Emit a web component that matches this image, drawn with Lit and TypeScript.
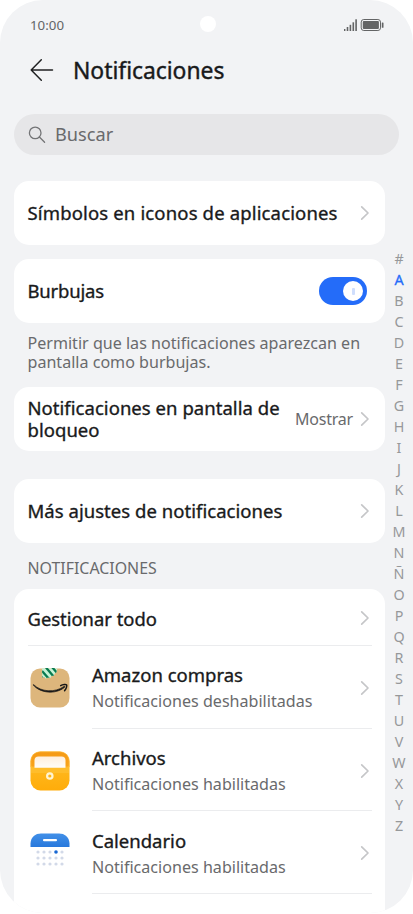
import { LitElement, html, css, svg } from "lit";

const base = css`
  :host { display: block; box-sizing: border-box; font-family: "Noto Sans", sans-serif; color: #191a1b; }
  * { box-sizing: border-box; }
  svg { display: block; flex: none; }
`;

const chevron = html`<svg width="10" height="16" viewBox="0 0 10 16" fill="none" stroke="#c5c6c8" stroke-width="1.7" stroke-linecap="round" stroke-linejoin="round"><path d="M1.700 1.800 8 8 1.700 14.200" /></svg>`;

const amazonIcon = html`<svg width="40" height="40" viewBox="0 0 40 40">
  <defs><clipPath id="tape"><path d="M12 0H27.500L26.300 4.500 25 5.200 24 7.600 21.600 7.900 20.300 10 18 9.600 15.600 10.800 14.500 9 12.300 9.400Z" /></clipPath></defs>
  <rect x=".5" y=".5" width="39" height="39" rx="9.500" fill="#ddb67c" />
  <g clip-path="url(#tape)">
    <rect x="11" y=".5" width="18" height="12" fill="#c5f3d5" />
    <path d="M10 7 14 12M12 3 20 12M16-.5 24 9M22-1 28 6" stroke="#087a50" stroke-width="2.300" />
  </g>
  <path d="M3.700 16.700C11 24 25 25 34 18.400c.700-.300 1.200.300.600.900C25.500 26.800 10.500 25.200 3.400 17.200c-.300-.400 0-.800.300-.500Z" fill="#171717" stroke="#171717" stroke-width=".7" />
  <path d="M30.700 17.600c2-1.200 5.400-1.300 5.900-.7.400.800-.100 3.800-2 5.700" fill="none" stroke="#171717" stroke-width="1.500" stroke-linecap="round" />
</svg>`;

const filesIcon = html`<svg width="40" height="40" viewBox="0 0 40 40">
  <defs>
    <linearGradient id="back" x2="0" y2="1"><stop offset="0" stop-color="#f59a16" /><stop offset="1" stop-color="#f9a41a" /></linearGradient>
    <linearGradient id="front" x2="0" y2="1"><stop offset="0" stop-color="#ffc02b" /><stop offset="1" stop-color="#ffac0a" /></linearGradient>
    <linearGradient id="paper" x2="0" y2="1"><stop offset="0" stop-color="#ffefdc" /><stop offset="1" stop-color="#fffdf9" /></linearGradient>
  </defs>
  <rect x=".5" y=".5" width="39" height="39" rx="10" fill="url(#front)" />
  <path d="M.8 16V10.500C.8 4.500 5 .8 10.500.8H29.500C35 .8 39.200 4.500 39.200 10.500V16Z" fill="url(#back)" stroke="#ffc14d" stroke-width=".6" />
  <path d="M1 14.500c1 2 2.500 2.400 4 2.400H35c1.500 0 3-.4 4-2.400V22H1Z" fill="#ffbd2b" />
  <path d="M4.500 16.800V9.500Q4.500 5.500 8.500 5.500H31.500Q35.500 5.500 35.500 9.500V16.800Z" fill="url(#paper)" />
  <circle cx="19.800" cy="25" r="2.700" fill="none" stroke="#fff4d2" stroke-width="2.200" />
</svg>`;

const dots = [19, 25, 31].flatMap((y, r) =>
  [8, 14, 20, 26, 32].map((x, c) => svg`<circle cx=${x} cy=${y} r=${r === 0 && c === 3 ? 1.8 : 1.6} fill=${r === 0 && c === 3 ? "#1767d2" : "#d2d9e8"} />`)
);
const calendarIcon = html`<svg width="40" height="40" viewBox="0 0 40 40">
  <defs><linearGradient id="cal" x2="0" y2="1"><stop offset="0" stop-color="#4290e8" /><stop offset="1" stop-color="#2878dc" /></linearGradient></defs>
  <path d="M.5 14V10.500C.8 3.800 5.500.5 11 .5H29C34.500.5 39.200 3.800 39.500 10.500V14Z" fill="url(#cal)" />
  <rect x="13" y="6" width="14" height="2.200" rx="1" fill="#fff" />
  ${dots}
</svg>`;

class StatusBar extends LitElement {
  static styles = [base, css`
    :host { height: 48px; padding: 0 28px 0 30px; display: grid; grid-template-columns: 1fr 16px 1fr; align-items: center; }
    .time { font-size: 13.300px; color: #636567; line-height: 18px; padding-top: 1px; }
    .camera { width: 16px; height: 16px; border-radius: 50%; background: #fff; }
    .right { display: flex; justify-content: flex-end; padding-top: 1px; }
  `];
  render() {
    return html`<div class="time">10:00</div><div class="camera"></div>
      <div class="right"><svg width="42" height="14" viewBox="0 0 42 14" fill="#636465">
        <rect x="1" y="11" width="1.400" height="2" /><rect x="3.700" y="9" width="1.600" height="4" /><rect x="6.600" y="6.800" width="1.600" height="6.200" /><rect x="9.500" y="4.300" width="1.600" height="8.700" /><rect x="12.300" y="1.300" width="1.600" height="11.700" />
        <rect x="18.200" y="1.500" width="19.300" height="11" rx="2.600" fill="none" stroke="#636465" stroke-width="1" />
        <rect x="19.800" y="3.100" width="16.100" height="7.800" rx="1" /><rect x="38.800" y="4.400" width="1.700" height="5.400" rx=".6" />
      </svg></div>`;
  }
}
customElements.define("status-bar", StatusBar);

class SettingRow extends LitElement {
  static properties = { label: {}, value: {}, toggle: { type: Boolean } };
  declare label: string;
  declare value: string;
  declare toggle: boolean;
  static styles = [base, css`
    :host { background: #fff; border-radius: 15px; height: 64px; padding: 0 15px 0 13.500px; display: flex; align-items: center; letter-spacing: .04px; }
    .label { flex: 1; font-size: 18.500px; line-height: 22px; -webkit-text-stroke: .35px currentColor; }
    .value { font-size: 16px; color: #696a6c; letter-spacing: -.2px; margin-right: 7px; }
    .switch { width: 48px; height: 28px; border-radius: 14px; background: #246cf9; margin-right: 3px; padding: 4px; display: flex; justify-content: flex-end; }
    .knob { width: 20px; height: 20px; border-radius: 50%; background: #fff; display: grid; place-items: center; }
    .mark { width: 3px; height: 7px; border-radius: 1px; background: #cfdefd; }
  `];
  render() {
    return html`<div class="label">${this.label}</div>
      ${this.value ? html`<div class="value">${this.value}</div>` : ""}
      ${this.toggle ? html`<div class="switch"><div class="knob"><div class="mark"></div></div></div>` : chevron}`;
  }
}
customElements.define("setting-row", SettingRow);

const apps = [
  { name: "Amazon compras", state: "Notificaciones deshabilitadas", icon: amazonIcon },
  { name: "Archivos", state: "Notificaciones habilitadas", icon: filesIcon },
  { name: "Calendario", state: "Notificaciones habilitadas", icon: calendarIcon },
];

class AppList extends LitElement {
  static styles = [base, css`
    :host { background: #fff; border-radius: 15px 15px 0 0; flex: 1; }
    .manage { height: 57px; margin: 0 13.500px; padding-right: 1.500px; display: flex; align-items: center; justify-content: space-between; border-bottom: 1px solid #ebecee; font-size: 18.400px; padding-top: 2px; }
    .item { height: 82.700px; padding-left: 16px; display: flex; align-items: center; gap: 22px; }
    .item > svg { margin-top: 1px; }
    .body { flex: 1; height: 100%; margin-right: 13.500px; padding: 2px 1.500px 0 0; border-bottom: 1px solid #ebecee; display: flex; align-items: center; justify-content: space-between; }
    .name { font-size: 18.500px; line-height: 24px; }
    .name, .manage span { -webkit-text-stroke: .35px currentColor; }
    .state { font-size: 16.100px; line-height: 22px; margin-top: 3px; color: #696a6c; }
  `];
  render() {
    return html`<div class="manage"><span>Gestionar todo</span>${chevron}</div>
      ${apps.map((a) => html`<div class="item">${a.icon}<div class="body"><div><div class="name">${a.name}</div><div class="state">${a.state}</div></div>${chevron}</div></div>`)}`;
  }
}
customElements.define("app-list", AppList);

class AppRoot extends LitElement {
  static styles = [base, css`
    :host { height: 914px; background: #fff; overflow: hidden; }
    .phone { position: relative; height: 913px; border-radius: 43px; background: #f2f3f5; overflow: hidden; display: flex; flex-direction: column; }
    .header { height: 44px; padding-left: 30px; display: flex; align-items: center; gap: 19px; }
    h1 { margin: 0; font-size: 22.900px; line-height: 30px; font-weight: 400; letter-spacing: -.03px; padding-top: 1px; -webkit-text-stroke: .4px currentColor; }
    .search { margin: 22px 14px 0; height: 41px; border-radius: 21px; background: #e6e6e8; padding-left: 14px; display: flex; align-items: center; gap: 9px; font-size: 18.200px; color: #696a6c; flex: none; }
    .search span { padding-bottom: 1px; }
    .content { margin: 26px 28px 0 14px; flex: 1; display: flex; flex-direction: column; }
    .content > * { flex: none; }
    .gap { margin-top: 14px; }
    .wide { letter-spacing: .150px; }
    .tight { letter-spacing: -.200px; }
    .hint { margin: 11px 13.500px 15px; font-size: 16.080px; line-height: 19px; color: #696a6c; white-space: nowrap; }
    .more { margin-top: 28px; }
    .section { margin: 14px 13.500px 10px; font-size: 15.900px; line-height: 22px; color: #696a6c; }
    .content > app-list { flex: 1; }
    .index { position: absolute; right: 4px; top: 247.500px; width: 20px; font-size: 14.300px; line-height: 21px; text-align: center; color: #96989a; }
    .active { color: #246cf9; -webkit-text-stroke: .3px currentColor; }
  `];
  render() {
    return html`<div class="phone">
      <status-bar></status-bar>
      <div class="header">
        <svg width="24" height="24" viewBox="0 0 24 24" fill="none" stroke="#202122" stroke-width="1.500" stroke-linecap="round" stroke-linejoin="round"><path d="M11.300 1.800 1.200 12 11.300 22.200M1.200 12H22.500" /></svg>
        <h1>Notificaciones</h1>
      </div>
      <div class="search">
        <svg width="18" height="18" viewBox="0 0 18 18" fill="none" stroke="#737476" stroke-width="1.300" stroke-linecap="round"><circle cx="7.200" cy="6.900" r="5.800" /><path d="M11.400 11 16.600 16.200" /></svg>
        <span>Buscar</span>
      </div>
      <div class="content">
        <setting-row class="wide" label="Símbolos en iconos de aplicaciones"></setting-row>
        <setting-row class="gap tight" label="Burbujas" toggle></setting-row>
        <div class="hint">Permitir que las notificaciones aparezcan en<br />pantalla como burbujas.</div>
        <setting-row label="Notificaciones en pantalla de bloqueo" value="Mostrar"></setting-row>
        <setting-row class="more" label="Más ajustes de notificaciones"></setting-row>
        <div class="section">NOTIFICACIONES</div>
        <app-list></app-list>
      </div>
      <div class="index">${[..."#ABCDEFGHIJKLMNÑOPQRSTUVWXYZ"].map((c) => html`<div class=${c === "A" ? "active" : ""}>${c}</div>`)}</div>
    </div>`;
  }
}
customElements.define("app-root", AppRoot);
